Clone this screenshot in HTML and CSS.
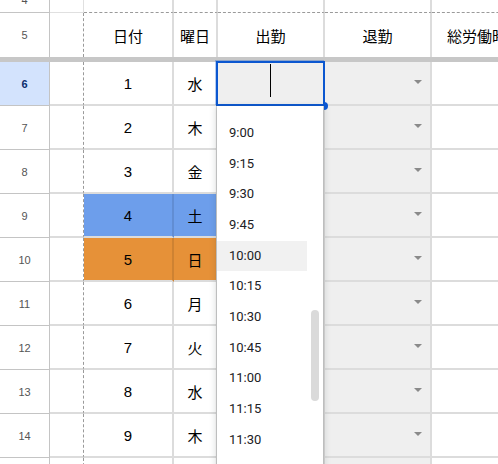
FILE: index.html
```html
<!DOCTYPE html>
<html lang="ja">
<head>
  <meta charset="UTF-8">
  <meta name="viewport" content="width=device-width, initial-scale=1.0">
  <title>勤怠表</title>
  <link rel="stylesheet" href="styles.css">
</head>
<body>
  <div class="sheet">
    <div class="row row-top">
      <div class="rh">4</div>
      <div class="cell a"></div>
      <div class="cell b"></div>
      <div class="cell c"></div>
      <div class="cell d"></div>
      <div class="cell e"></div>
      <div class="cell f"></div>
    </div>

    <div class="row row-head">
      <div class="rh">5</div>
      <div class="cell a"></div>
      <div class="cell b">日付</div>
      <div class="cell c">曜日</div>
      <div class="cell d">出勤</div>
      <div class="cell e">退勤</div>
      <div class="cell f">総労働時間</div>
    </div>

    <div class="freeze"></div>

    <div class="row selected">
      <div class="rh">6</div>
      <div class="cell a"></div>
      <div class="cell b">1</div>
      <div class="cell c">水</div>
      <div class="cell d pick editing">
        <span class="caret"></span>
        <div class="sel"></div>
        <div class="handle"></div>
        <!-- time picker for the 出勤 cell -->
        <div class="dropdown">
          <div class="options">
            <div class="opt">9:00</div>
            <div class="opt">9:15</div>
            <div class="opt">9:30</div>
            <div class="opt">9:45</div>
            <div class="opt hover">10:00</div>
            <div class="opt">10:15</div>
            <div class="opt">10:30</div>
            <div class="opt">10:45</div>
            <div class="opt">11:00</div>
            <div class="opt">11:15</div>
            <div class="opt">11:30</div>
          </div>
          <div class="thumb"></div>
        </div>
      </div>
      <div class="cell e pick"></div>
      <div class="cell f"></div>
    </div>

    <div class="row">
      <div class="rh">7</div>
      <div class="cell a"></div>
      <div class="cell b">2</div>
      <div class="cell c">木</div>
      <div class="cell d pick"></div>
      <div class="cell e pick"></div>
      <div class="cell f"></div>
    </div>

    <div class="row">
      <div class="rh">8</div>
      <div class="cell a"></div>
      <div class="cell b">3</div>
      <div class="cell c">金</div>
      <div class="cell d pick"></div>
      <div class="cell e pick"></div>
      <div class="cell f"></div>
    </div>

    <div class="row">
      <div class="rh">9</div>
      <div class="cell a"></div>
      <div class="cell b sat">4</div>
      <div class="cell c sat">土</div>
      <div class="cell d pick"></div>
      <div class="cell e pick"></div>
      <div class="cell f"></div>
    </div>

    <div class="row">
      <div class="rh">10</div>
      <div class="cell a"></div>
      <div class="cell b sun">5</div>
      <div class="cell c sun">日</div>
      <div class="cell d pick"></div>
      <div class="cell e pick"></div>
      <div class="cell f"></div>
    </div>

    <div class="row">
      <div class="rh">11</div>
      <div class="cell a"></div>
      <div class="cell b">6</div>
      <div class="cell c">月</div>
      <div class="cell d pick"></div>
      <div class="cell e pick"></div>
      <div class="cell f"></div>
    </div>

    <div class="row">
      <div class="rh">12</div>
      <div class="cell a"></div>
      <div class="cell b">7</div>
      <div class="cell c">火</div>
      <div class="cell d pick"></div>
      <div class="cell e pick"></div>
      <div class="cell f"></div>
    </div>

    <div class="row">
      <div class="rh">13</div>
      <div class="cell a"></div>
      <div class="cell b">8</div>
      <div class="cell c">水</div>
      <div class="cell d pick"></div>
      <div class="cell e pick"></div>
      <div class="cell f"></div>
    </div>

    <div class="row">
      <div class="rh">14</div>
      <div class="cell a"></div>
      <div class="cell b">9</div>
      <div class="cell c">木</div>
      <div class="cell d pick"></div>
      <div class="cell e pick"></div>
      <div class="cell f"></div>
    </div>

    <div class="row">
      <div class="rh"></div>
      <div class="cell a"></div>
      <div class="cell b"></div>
      <div class="cell c"></div>
      <div class="cell d pick"></div>
      <div class="cell e pick"></div>
      <div class="cell f"></div>
    </div>
  </div>
</body>
</html>
```

FILE: styles.css
```css
body {
  margin: 0;
  overflow: hidden;
  background-color: #fff;
  color: #000;
  font-family: "Liberation Sans", Arial, "Noto Sans CJK JP", sans-serif;
}
.sheet {
  margin-top: -12px;
}
.row {
  display: flex;
  height: 44px;
}
.row-top {
  height: 25px;
}

/* row numbers on the left */
.rh {
  flex: 0 0 50px;
  box-sizing: border-box;
  display: flex;
  align-items: center;
  justify-content: center;
  border-right: 1px solid #c4c4c4;
  border-bottom: 1px solid #c4c4c4;
  font-size: 11px;
  color: #555;
}
.selected .rh {
  background-color: #d3e3fd;
  color: #0b2c6b;
  font-weight: bold;
}

.cell {
  flex-shrink: 0;
  box-sizing: border-box;
  display: flex;
  align-items: center;
  justify-content: center;
  border-right: 2px solid #dcdcdc;
  border-bottom: 2px solid #dcdcdc;
  font-size: 15px;
}
.a {
  width: 34px;
  border-right: 1px dashed #9a9a9a;
}
.b {
  width: 90px;
}
.c {
  width: 44px;
}
.d, .e, .f {
  width: 107px;
}

/* print area edge along the top */
.row-top .a {
  border-right: 1px solid #e0e0e0;
  border-bottom: 1px solid #e0e0e0;
}
.row-top .b, .row-top .c, .row-top .d, .row-top .e, .row-top .f {
  border-bottom: 1px dashed #9a9a9a;
}
.row-head .rh, .row-head .cell {
  border-bottom: none;
}

.freeze {
  height: 5px;
  background-color: #c7c7c7;
}

.sat {
  background-color: #6d9eeb;
}
.sun {
  background-color: #e69138;
}
.b.sat, .b.sun {
  border-right-color: rgba(0, 0, 0, 0.1);
}

/* cells with a dropdown chip */
.pick {
  background-color: #efefef;
  justify-content: flex-end;
  padding-right: 8px;
}
.pick::after {
  content: "";
  margin-top: -2px;
  border-left: 4px solid transparent;
  border-right: 4px solid transparent;
  border-top: 4px solid #8a8a8a;
}

.editing {
  position: relative;
  justify-content: center;
  padding: 0;
}
.editing::after {
  content: none;
}
.caret {
  align-self: flex-start;
  margin-top: 2px;
  width: 1.5px;
  height: 33px;
  background-color: #000;
}
.sel {
  position: absolute;
  left: -2px;
  top: -1px;
  right: -2px;
  bottom: -2px;
  border: 2px solid #0b57d0;
  box-shadow: -1px -1px 0 rgba(11, 87, 208, 0.3);
}
.handle {
  position: absolute;
  right: -5px;
  bottom: -6px;
  width: 4px;
  height: 8px;
  border-radius: 0 4px 4px 0;
  background-color: #0b57d0;
  z-index: 3;
}

.dropdown {
  position: absolute;
  top: 44px;
  left: -1px;
  width: 106px;
  height: 370px;
  background-color: #fff;
  box-shadow: 0 1px 2px rgba(60, 64, 67, 0.3), 0 2px 6px 2px rgba(60, 64, 67, 0.15);
  overflow: hidden;
  z-index: 2;
}
.options {
  width: 90px;
  padding-top: 12px;
}
.opt {
  display: flex;
  align-items: center;
  height: 30.7px;
  padding-left: 12px;
  padding-bottom: 2px;
  box-sizing: border-box;
  font-family: Roboto, "Liberation Sans", sans-serif;
  font-size: 13px;
  color: #202124;
}
.opt.hover {
  background-color: #f1f1f1;
}
.thumb {
  position: absolute;
  left: 94px;
  top: 204px;
  width: 8px;
  height: 91px;
  border-radius: 4px;
  background-color: #dadada;
}
```
